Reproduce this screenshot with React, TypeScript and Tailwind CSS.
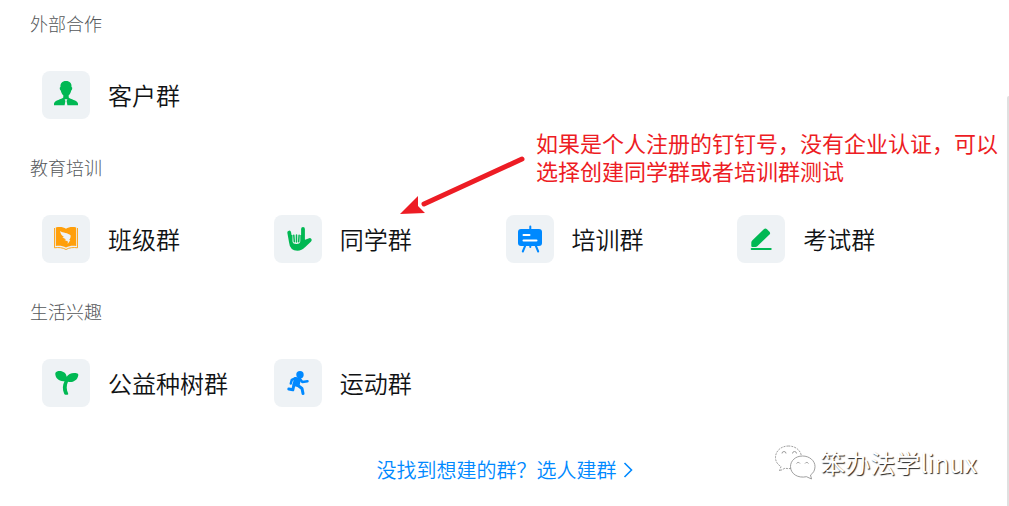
import type { ReactNode } from "react";

type Group = { name: string; icon: ReactNode };
type Section = { title: string; groups: Group[] };

function CustomerIcon() {
  return (
    <svg viewBox="0 0 24 24" className="size-6 overflow-visible" fill="#00b853" aria-hidden="true">
      <path d="M12 -2C8 -2 6.200 .5 6.500 4C5.300 4 5.700 7 6.800 7.500C7.200 9.800 8 11.200 9.300 12.300V14.500C7.500 16.700 1 16.700 0 20.500V22.300H10.600L11.400 18L10.600 16.300H13.400L12.600 18L13.400 22.300H24V20.500C23 16.700 16.500 16.700 14.700 14.500V12.300C16 11.200 16.800 9.800 17.200 7.500C18.300 7 18.700 4 17.500 4C17.800 .5 16 -2 12 -2Z" />
    </svg>
  );
}

function ClassIcon() {
  return (
    <svg viewBox="0 0 24 24" className="size-6 overflow-visible" fill="none" aria-hidden="true">
      <path d="M1.800 .5C5 -.3 9.500 -.2 12 1.800C14.500 -.2 19 -.3 22.200 .5V19C18.500 18.500 15 18.800 12 20.500C9 18.800 5.500 18.500 1.800 19Z" fill="#ff9f0a" />
      <path d="M.5 1V20.800C4.500 20.200 8.500 20.500 12 22.500C15.500 20.500 19.500 20.200 23.500 20.800V1" stroke="#ff9f0a" strokeWidth=".9" />
      <path d="M6 4C9 6 14 5.700 16.700 8.500C16.800 11 15.500 12.500 15.200 13L16.300 13.200L13.700 17L13.900 14.600L10.500 13L12 12.200L8.300 10.500L10 10C7.500 8.500 6.500 6.500 6 4Z" fill="#eef2f5" />
    </svg>
  );
}

function ClassmateIcon() {
  return (
    <svg viewBox="0 0 24 24" className="size-6 overflow-visible" fill="none" strokeLinecap="round" strokeLinejoin="round" aria-hidden="true">
      <path d="M3.200 5.500L4.800 15Q5.500 21.500 11.500 21.500Q15.500 21.500 18 18.500L23.500 13L17.500 15V8H4.500Z" fill="#00b853" />
      <path d="M3.200 5.500L4.800 14.500Q5.500 21.800 11.500 21.800Q15 21.800 17.500 19L23.800 13L17 15.500V2" stroke="#00b853" strokeWidth="3.800" />
      <path d="M6.500 7V14.500Q6.800 17 10.500 17Q14.300 17 14.300 14V7Z" fill="#eef2f5" />
      <path d="M7.800 8.300L8.300 14.800M10.500 8V15M13.100 8.300L12.700 14.800" stroke="#00b853" strokeWidth="1.500" />
    </svg>
  );
}

function TrainingIcon() {
  return (
    <svg viewBox="0 0 24 24" className="size-6 overflow-visible" fill="none" strokeLinecap="round" aria-hidden="true">
      <path d="M12.300 -.5V4M7.500 18L4.800 24.500M17.500 18L20.200 24.500M12.300 18V20" stroke="#0089ff" strokeWidth="2" />
      <rect y="2" width="24" height="17" rx="3" fill="#0089ff" />
      <path d="M5.500 8H11.500M5.500 13.500H18.500" stroke="#fff" strokeWidth="2" />
    </svg>
  );
}

function ExamIcon() {
  return (
    <svg viewBox="0 0 24 24" className="size-6 overflow-visible" fill="#00b853" aria-hidden="true">
      <path d="M14.800 2.200L3.200 13.500Q2.300 14.400 2.300 15.500V19Q2.300 20 3.300 20H6.500Q7.500 20 8.300 19.200L20.500 7.500Q21.800 6.200 20.500 4.800L18 2.200Q16.400 .7 14.800 2.200Z" />
      <rect x="1.700" y="21.100" width="21" height="1.900" rx=".9" />
    </svg>
  );
}

function TreeIcon() {
  return (
    <svg viewBox="0 0 24 24" className="size-6 overflow-visible" fill="#00b853" aria-hidden="true">
      <path d="M3 .4C8 -.8 12 1.500 12.700 5.800C14.500 2.500 19 1.300 23.300 2.500Q24.500 2.800 24.300 4.200C23.500 9.500 18.500 11.800 14 10.800C12.300 14.500 12.200 18.500 14.200 22.500Q14.500 23.800 13.200 23.800H11.500Q10.600 23.800 10.200 22.800C8.300 18.300 8.500 14 10.500 10.200C5 10.800 1 7 1.300 2.300Q1.500 .8 3 .4Z" />
    </svg>
  );
}

function SportIcon() {
  return (
    <svg viewBox="0 0 24 24" className="size-6 overflow-visible" fill="none" stroke="#0089ff" strokeLinecap="round" strokeLinejoin="round" aria-hidden="true">
      <circle cx="14" cy="3.700" r="3.700" fill="#0089ff" stroke="none" />
      <path d="M9.500 7.500L13.500 8.500L12 14.500L8 13.500Z" fill="#0089ff" strokeWidth="3" />
      <path d="M9.500 7.200L5.800 8.800L4.800 12.500M14 8L16.300 11L21.500 10.200" strokeWidth="2.500" />
      <path d="M8 13.500L6.800 18.800L2.800 18M12 14.500L16 17.500L17 22.500" strokeWidth="3" />
    </svg>
  );
}

const sections: Section[] = [
  { title: "外部合作", groups: [{ name: "客户群", icon: <CustomerIcon /> }] },
  {
    title: "教育培训",
    groups: [
      { name: "班级群", icon: <ClassIcon /> },
      { name: "同学群", icon: <ClassmateIcon /> },
      { name: "培训群", icon: <TrainingIcon /> },
      { name: "考试群", icon: <ExamIcon /> },
    ],
  },
  {
    title: "生活兴趣",
    groups: [
      { name: "公益种树群", icon: <TreeIcon /> },
      { name: "运动群", icon: <SportIcon /> },
    ],
  },
];

function GroupSection({ title, groups }: Section) {
  return (
    <section>
      <h2 className="pl-[30px] text-lg leading-6 font-light text-[#54575a]">{title}</h2>
      <ul className="mt-9 grid grid-cols-4 pr-10 pl-[42px]">
        {groups.map((group) => (
          <li key={group.name}>
            <button type="button" className="flex items-center gap-[18px] text-2xl font-[350] whitespace-nowrap text-[#101214]">
              <span className="flex size-12 items-center justify-center rounded-lg bg-[#eef2f5]">{group.icon}</span>
              {group.name}
            </button>
          </li>
        ))}
      </ul>
    </section>
  );
}

function Annotation() {
  return (
    <>
      <svg viewBox="0 0 130 64" className="absolute top-[154px] left-[398px] h-16 w-[130px]" aria-hidden="true">
        <path d="M124 5L26 50" stroke="#ed1c24" strokeWidth="5" strokeLinecap="round" />
        <path d="M2 60L20 42L20 52L27 59Z" fill="#ed1c24" />
      </svg>
      <p className="absolute top-32 left-[536px] text-[22px] leading-7 whitespace-nowrap text-[#ed1c24]">
        如果是个人注册的钉钉号，没有企业认证，可以
        <br />
        选择创建同学群或者培训群测试
      </p>
    </>
  );
}

function Watermark() {
  return (
    <div className="absolute right-8 bottom-6 flex items-center gap-1 text-[25px] leading-10 whitespace-nowrap text-white [text-shadow:1px_1px_1px_#222]">
      <svg viewBox="0 0 42 36" className="h-9 w-[42px]" fill="#fff" stroke="#888" strokeWidth=".8" aria-hidden="true">
        <path d="M14.500 2C7 2 1.500 7 1.500 13.500C1.500 17.500 3.500 20.500 7 22.500L5.500 27L11 24.200C19 26 27.500 21.500 27.500 13.500C27.500 7 22 2 14.500 2Z" strokeDasharray="2 1" />
        <path d="M28.500 12C21.500 12 16.500 16.800 16.500 22.500C16.500 30 24 34.500 32.500 32.700L37.500 35L36.500 31C39.500 29 41 26 41 22.500C41 16.800 35.500 12 28.500 12Z" />
        <path d="M8 9.500A2 2 0 0 1 12 9.500M18.500 9.500A2 2 0 0 1 22.500 9.500M22.500 19.500A2 2 0 0 1 26 19.500M31 19.500A2 2 0 0 1 34.500 19.500" />
      </svg>
      <span>笨办法学linux</span>
    </div>
  );
}

export default function App() {
  return (
    <main className="relative min-h-screen overflow-hidden bg-white pt-[11px] pb-6 font-['Noto_Sans_CJK_SC',sans-serif]">
      <div className="flex flex-col gap-9">
        {sections.map((section) => (
          <GroupSection key={section.title} {...section} />
        ))}
      </div>
      <div className="mt-[51px] flex justify-center">
        <a href="#create" className="flex items-center gap-1.5 text-xl leading-6 font-[350] text-[#0089ff]">
          没找到想建的群？选人建群
          <svg viewBox="0 0 10 16" className="h-4 w-2.5" fill="none" stroke="currentColor" strokeWidth="1.600" aria-hidden="true">
            <path d="M1.500 1L8.500 8L1.500 15" />
          </svg>
        </a>
      </div>
      <Annotation />
      <Watermark />
      <div className="absolute top-24 right-0 bottom-0 w-0.5 rounded-tl-sm bg-[#e0e0e0]" />
    </main>
  );
}
